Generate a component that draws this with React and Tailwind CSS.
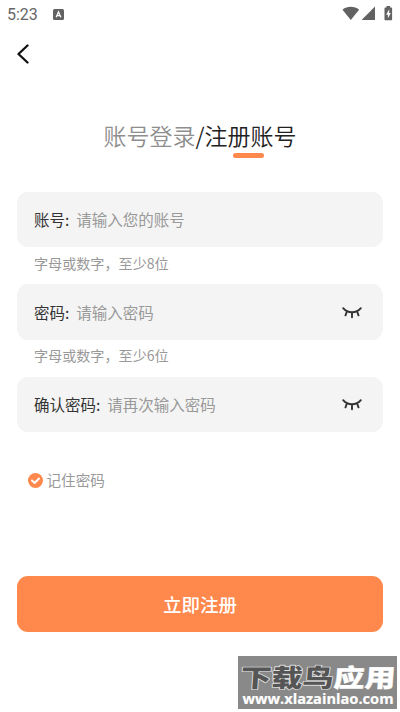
const CJK = "font-['Noto_Sans_CJK_SC',sans-serif]";

function ClosedEye() {
  return (
    <svg className="h-[14px] w-[20px]" viewBox="0 0 20 14" fill="none" stroke="#333" strokeWidth="1.9" strokeLinecap="round">
      <path d="M1.200 2.200C3.500 5 6.500 6.300 10 6.300S16.500 5 18.800 2.200M10 6.500V11.300M4.900 5.500L3.500 9.300M15.100 5.500L16.500 9.300" />
    </svg>
  );
}

function Field({ label, placeholder, eye }) {
  return (
    <div className="flex h-[55.500px] items-center rounded-[11px] bg-[#f4f4f4] pl-[17px] pr-[21px] pt-[1.500px] text-[15.500px] leading-none">
      <span className="whitespace-nowrap text-[#333]">{label}:</span>
      <span className="ml-[7px] flex-1 whitespace-nowrap text-[#999]">{placeholder}</span>
      {eye && <ClosedEye />}
    </div>
  );
}

function Hint({ children }) {
  return <div className="flex h-[37px] items-center pb-[5.500px] pl-[17px] text-[14.100px] leading-none text-[#999]">{children}</div>;
}

function StatusBar() {
  return (
    <div className="flex h-[28px] items-center pl-[7px] pr-[7px]">
      <span className="w-[46px] pt-[1px] font-[Roboto,sans-serif] text-[16px] leading-none text-[#666]">5:23</span>
      <svg className="h-[11px] w-[11px]" viewBox="0 0 11 11">
        <rect width="11" height="11" rx="1.500" fill="#626262" />
        <path d="M3.200 8.200L5.500 2.800L7.800 8.200M4.200 6.700H6.800" fill="none" stroke="#fff" strokeWidth="1.300" />
      </svg>
      <svg className="ml-auto h-[16px] w-[51px]" viewBox="0 0 51 16">
        <g fill="#626262">
          <path d="M.5 3.700C5-.1 12.500-.1 17.100 3.700L8.800 14z" />
          <path d="M33 .5V14H19.600z" />
          <path d="M43.300 1.500h1.200V0h3.600v1.500h1.200a.8.8 0 0 1 .8.8V13.500a.8.8 0 0 1-.8.8h-6a.8.8 0 0 1-.8-.8V2.300a.8.8 0 0 1 .8-.8z" />
        </g>
        <path d="M47.200 3.300L44.100 8.700h1.800v3.600l3-5.200h-1.700z" fill="#fff" />
      </svg>
    </div>
  );
}

function Watermark() {
  return (
    <div className="absolute left-[238px] top-[656px] h-[53px] w-[159px] bg-[#898989]">
      <svg className="h-[53px] w-[159px] overflow-visible" viewBox="0 0 159 53">
        <g className="font-['Noto_Sans_CJK_SC',sans-serif] font-black" strokeLinejoin="round">
          <text transform="translate(2 30.500) skewX(-4) scale(1.240 1)" fontSize="25" fill="#555" stroke="#ddd" strokeWidth="1.600" paintOrder="stroke">下载鸟</text>
          <text transform="translate(95 30.500) skewX(-4) scale(1.240 1)" fontSize="25" fill="#fff" stroke="#fff" strokeWidth="0.300">应用</text>
        </g>
        <text x="4.500" y="47.500" textLength="151" lengthAdjust="spacingAndGlyphs" fontSize="14.500" fill="#fff" stroke="#fff" strokeWidth="0.200" className="font-['Open_Sans',sans-serif] font-bold">www.xlazainlao.com</text>
      </svg>
    </div>
  );
}

export default function App() {
  return (
    <div className={`relative h-[712px] w-[400px] bg-white ${CJK}`}>
      <StatusBar />
      <div className="flex h-[52px] items-center pl-[16px]">
        <svg className="h-[20px] w-[14px]" viewBox="0 0 14 20" fill="none" stroke="#111" strokeWidth="2.300" strokeLinecap="round" strokeLinejoin="round">
          <path d="M11.500 1.500L2.500 10L11.500 18.500" />
        </svg>
      </div>
      <div className="flex h-[111.500px] flex-col items-center pt-[42px]">
        <h1 className="whitespace-nowrap text-[23px] font-[350] leading-[26px] text-[#222]">
          <span className="text-[#8e8e8e]">账号登录</span>/注册账号
        </h1>
        <div className="ml-[97px] mt-[5px] h-[4.500px] w-[31px] rounded-full bg-[#ff884d]" />
      </div>
      <main className="px-[17px]">
        <Field label="账号" placeholder="请输入您的账号" />
        <Hint>字母或数字，至少8位</Hint>
        <Field label="密码" placeholder="请输入密码" eye />
        <Hint>字母或数字，至少6位</Hint>
        <Field label="确认密码" placeholder="请再次输入密码" eye />
        <div className="mt-[40px] flex h-[16px] items-center pl-[11px]">
          <svg className="h-[15px] w-[15px]" viewBox="0 0 15 15">
            <circle cx="7.500" cy="7.500" r="7.500" fill="#ff884d" />
            <path d="M4 7.500L6.600 10L11 5.500" fill="none" stroke="#fff" strokeWidth="1.900" strokeLinecap="round" strokeLinejoin="round" />
          </svg>
          <span className="ml-[3.500px] pt-px text-[14.600px] leading-none text-[#999]">记住密码</span>
        </div>
        <button className="mt-[88px] flex h-[55.500px] w-full items-center justify-center rounded-[11px] bg-[#ff884d] text-[18.500px] font-medium leading-none text-white">立即注册</button>
      </main>
      <Watermark />
    </div>
  );
}
